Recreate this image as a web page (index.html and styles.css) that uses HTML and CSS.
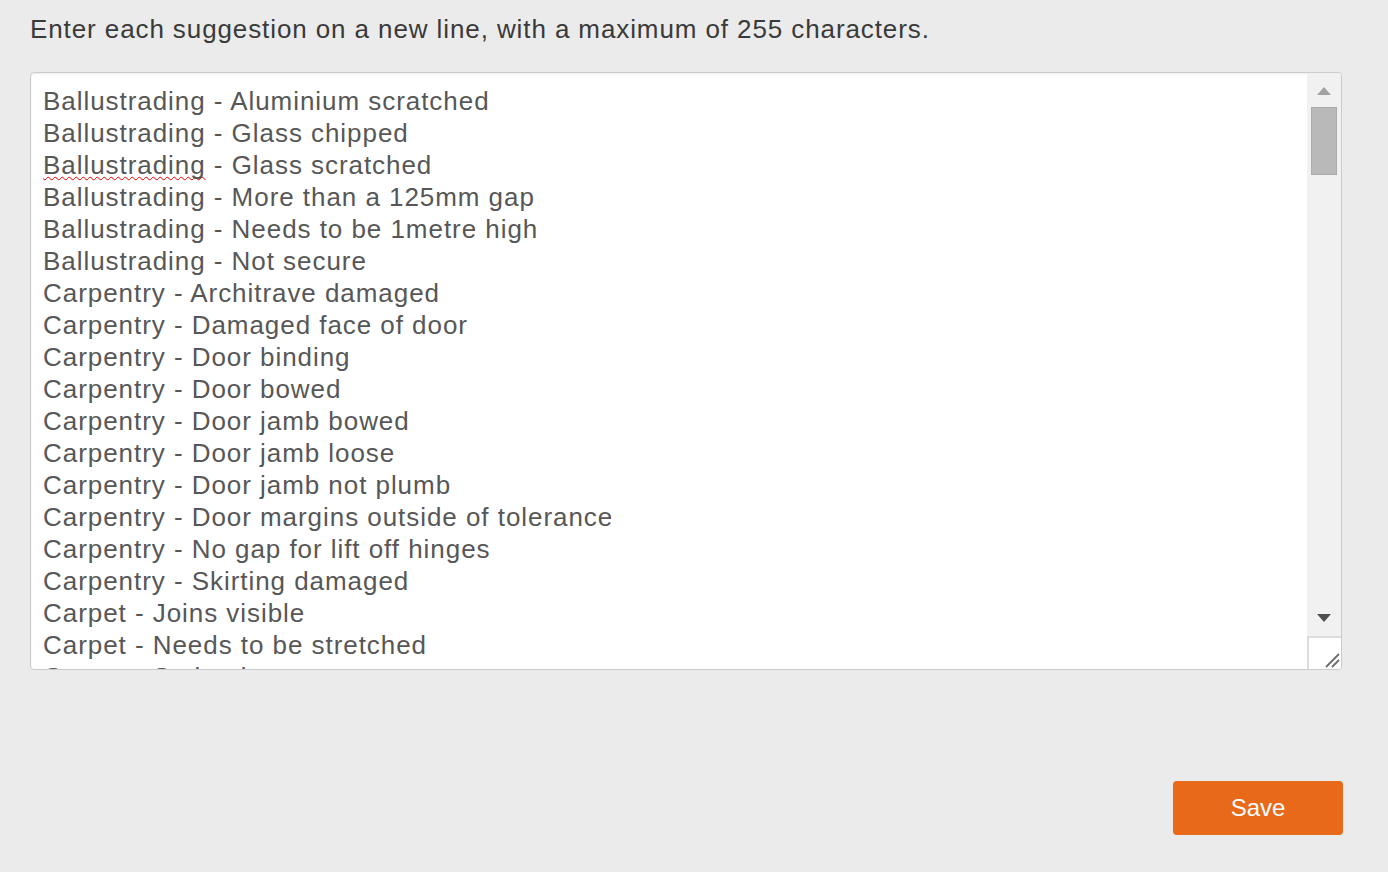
FILE: index.html
```html
<!DOCTYPE html>
<html>
<head>
<meta charset="utf-8">
<link rel="stylesheet" href="styles.css">
</head>
<body>
<div class="page">
  <p class="intro">Enter each suggestion on a new line, with a maximum of 255 characters.</p>
  <div class="textarea">
    <div class="content">
      <div class="line">Ballustrading - Aluminium scratched</div>
      <div class="line">Ballustrading - Glass chipped</div>
      <div class="line"><span class="misspelt">Ballustrading</span> - Glass scratched</div>
      <div class="line">Ballustrading - More than a 125mm gap</div>
      <div class="line">Ballustrading - Needs to be 1metre high</div>
      <div class="line">Ballustrading - Not secure</div>
      <div class="line">Carpentry - Architrave damaged</div>
      <div class="line">Carpentry - Damaged face of door</div>
      <div class="line">Carpentry - Door binding</div>
      <div class="line">Carpentry - Door bowed</div>
      <div class="line">Carpentry - Door jamb bowed</div>
      <div class="line">Carpentry - Door jamb loose</div>
      <div class="line">Carpentry - Door jamb not plumb</div>
      <div class="line">Carpentry - Door margins outside of tolerance</div>
      <div class="line">Carpentry - No gap for lift off hinges</div>
      <div class="line">Carpentry - Skirting damaged</div>
      <div class="line">Carpet - Joins visible</div>
      <div class="line">Carpet - Needs to be stretched</div>
      <div class="line">Carpet - Stained</div>
    </div>
    <div class="scrollbar">
      <div class="track">
        <div class="arrow up"></div>
        <div class="thumb"></div>
        <div class="spacer"></div>
        <div class="arrow down"></div>
      </div>
      <div class="resizer">
        <svg width="16" height="16" viewBox="0 0 16 16"><path d="M15 2 L2 15 M15 8 L8 15" stroke="#6e6e6e" stroke-width="1.8" fill="none"/></svg>
      </div>
    </div>
  </div>
  <div class="actions">
    <button class="save">Save</button>
  </div>
</div>
</body>
</html>
```

FILE: styles.css
```css
html, body {
  margin: 0;
  padding: 0;
  background: #ebebeb;
  font-family: "Liberation Sans", Arial, sans-serif;
}

.page {
  padding: 14px 45px 0 30px;
}

.intro {
  margin: 0;
  font-size: 26px;
  line-height: 30px;
  letter-spacing: 0.9px;
  color: #3a3a3a;
}

.textarea {
  margin-top: 28px;
  height: 598px;
  box-sizing: border-box;
  border: 1px solid #cbcbcb;
  border-radius: 4px;
  background: #fff;
  box-shadow: inset 0 1px 2px rgba(0, 0, 0, 0.08);
  display: flex;
  overflow: hidden;
  margin-right: 1px;
}

.content {
  flex: 1;
  padding: 12px 0 0 12px;
  overflow: hidden;
  font-size: 26px;
  line-height: 32px;
  letter-spacing: 0.95px;
  color: #575757;
  white-space: nowrap;
}

.misspelt {
  text-decoration: underline wavy #e00;
  text-decoration-thickness: 1px;
  text-underline-offset: 2px;
  text-decoration-skip-ink: none;
}

.scrollbar {
  width: 34px;
  display: flex;
  flex-direction: column;
  flex: none;
}

.track {
  flex: 1;
  background: #f1f1f1;
  display: flex;
  flex-direction: column;
  align-items: center;
}

.arrow {
  width: 0;
  height: 0;
  border-left: 7px solid transparent;
  border-right: 7px solid transparent;
}

.arrow.up {
  margin-top: 14px;
  border-bottom: 8px solid #a3a3a3;
}

.arrow.down {
  margin-bottom: 14px;
  border-top: 8px solid #505050;
}

.thumb {
  margin-top: 12px;
  width: 26px;
  height: 68px;
  box-sizing: border-box;
  background: #b9b9b9;
  border: 1px solid #ababab;
}

.spacer {
  flex: 1;
}

.resizer {
  height: 33px;
  background: #fff;
  border-top: 2px solid #dcdcdc;
  border-left: 2px solid #dcdcdc;
  box-sizing: border-box;
  display: flex;
  align-items: flex-end;
  justify-content: flex-end;
  padding: 0 1px 1px 0;
}

.actions {
  display: flex;
  justify-content: flex-end;
  margin-top: 111px;
}

.save {
  width: 170px;
  height: 54px;
  border: none;
  border-radius: 4px;
  background: #e8691a;
  color: #fff;
  font-family: "Liberation Sans", Arial, sans-serif;
  font-size: 24px;
  cursor: pointer;
}
```
